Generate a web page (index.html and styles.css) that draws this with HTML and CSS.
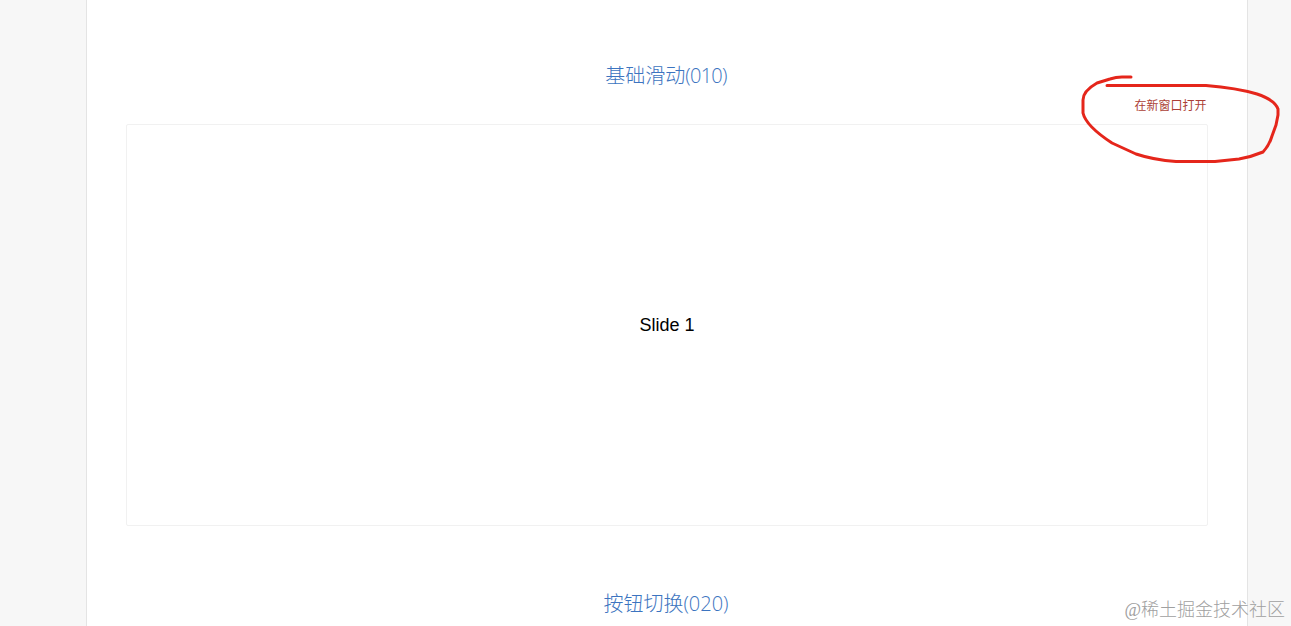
FILE: index.html
```html
<!DOCTYPE html>
<html lang="zh-CN">

<head>
  <meta charset="UTF-8" />
  <meta name="viewport" content="width=device-width, initial-scale=1.0" />
  <title>Swiper</title>
  <link rel="stylesheet" href="styles.css">
</head>

<body>
  <div class="container">
    <section class="demo">
      <h3>基础滑动<span class="tight">(010)</span></h3>
      <a class="open" href="#">在新窗口打开</a>
      <div class="swiper">
        <div class="slide">Slide 1</div>
      </div>
    </section>
    <section class="demo">
      <h3>按钮切换(020)</h3>
    </section>
  </div>

  <!-- Hand drawn circle around the link -->
  <svg class="mark" viewBox="0 0 210 100" width="210" height="100">
    <path d="M61 11 H52 Q46 11 40 13 L27 17 Q13 25 13 34 V47 Q16 60 42 77 L66 88 Q84 94 106 95.500 H145 L169 93 Q181 91 193 86 Q199 80 202 70 L206 59 L208 49 V43 Q205 34 187 28 Q167 22 136 19.500 H37" />
  </svg>
  <div class="watermark">@稀土掘金技术社区</div>
</body>

</html>
```
FILE: styles.css
```css
* {
  margin: 0;
  padding: 0;
  box-sizing: border-box;
}

body {
  height: 626px;
  overflow: hidden;
  position: relative;
  background: #f7f7f7;
  font-family: "Liberation Sans", "Noto Sans CJK SC", sans-serif;
}

.container {
  width: 1162px;
  height: 626px;
  margin-left: 86px;
  padding: 61px 39px 0;
  overflow: hidden;
  background: #fff;
  border-left: 1px solid #e4e4e4;
  border-right: 1px solid #e4e4e4;
}

.demo {
  display: flex;
  flex-direction: column;
  margin-bottom: 63px;
}

h3 {
  height: 30px;
  line-height: 30px;
  padding-right: 2px;
  text-align: center;
  color: #3c74c0;
  font-family: "Open Sans", "Noto Sans CJK SC", sans-serif;
  font-size: 20px;
  font-weight: 300;
}

.tight {
  letter-spacing: -0.7px;
}

.open {
  align-self: flex-end;
  height: 33px;
  padding-right: 1.5px;
  line-height: 30px;
  color: #ac3f36;
  font-size: 12px;
  text-decoration: none;
}

.swiper {
  height: 402px;
  border: 1px solid #f1f1f1;
  border-radius: 2px;
}

.slide {
  height: 100%;
  display: flex;
  align-items: center;
  justify-content: center;
  color: #000;
  font-size: 18px;
}

.mark {
  position: absolute;
  left: 1070px;
  top: 66px;
  fill: none;
  stroke: #e5261b;
  stroke-width: 3;
  stroke-linecap: round;
  stroke-linejoin: round;
}

.watermark {
  position: absolute;
  right: 6px;
  bottom: 2px;
  color: #a0a0a0;
  font-family: "Liberation Serif", "Noto Sans CJK SC", serif;
  font-size: 18px;
  font-weight: 300;
  line-height: 28px;
}
```
